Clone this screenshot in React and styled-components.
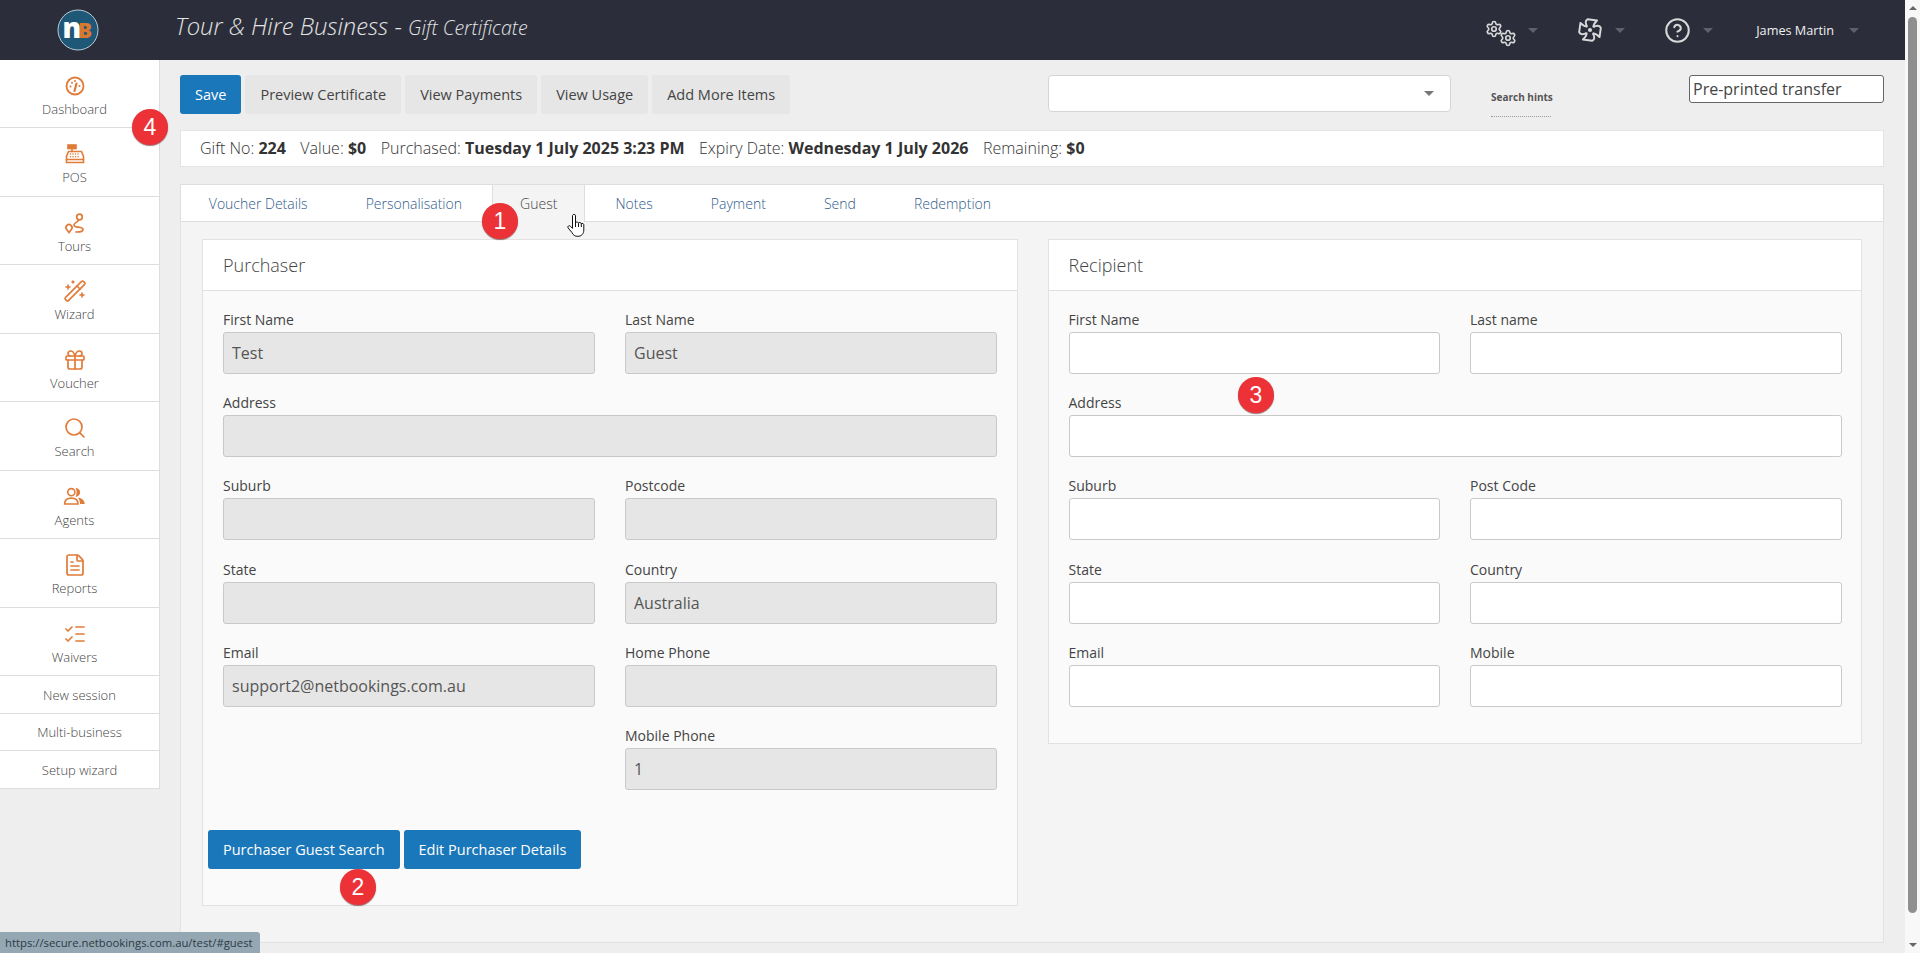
import React from 'react'
import styled, { createGlobalStyle } from 'styled-components'
import {
  CircleHelp,
  FileText,
  Gift,
  ListChecks,
  Search,
  Settings,
  WandSparkles,
} from 'lucide-react'

const GlobalStyle = createGlobalStyle`
  html, body {
    margin: 0;
    height: 100%;
    overflow: hidden;
    background: #eeeeee;
    font-family: 'Open Sans', 'Liberation Sans', sans-serif;
    color: #444;
  }
  * { box-sizing: border-box; }
`

const Page = styled.div`
  position: relative;
  display: flex;
  width: 1920px;
  height: 953px;
  overflow: hidden;
`

const Main = styled.div`
  width: 1905px;
  display: flex;
  flex-direction: column;
`

const TopBar = styled.header`
  height: 60px;
  flex: none;
  display: flex;
  align-items: center;
  background: #2b2e3a;
  color: #e4e4e4;
`

const Logo = styled.svg`
  width: 42px;
  height: 42px;
  margin-left: 57px;
  flex: none;
`

const Title = styled.div`
  margin-left: 76px;
  margin-top: -8px;
  font-size: 23.8px;
  font-weight: 300;
  font-style: italic;

  small {
    font-size: 19.6px;
  }
`

const TopIcons = styled.div`
  margin-left: auto;
  display: flex;
  align-items: center;
  padding-right: 46px;
`

const TopItem = styled.div`
  display: flex;
  align-items: center;
  margin-left: ${props => props.$gap || 0}px;
  font-size: 12.7px;
  color: #f0f0f0;
  svg { color: #d8d8d8; }
`

const Caret = styled.span`
  width: 0;
  height: 0;
  margin-left: ${props => props.$gap || 12}px;
  border-left: 5px solid transparent;
  border-right: 5px solid transparent;
  border-top: 5px solid ${props => props.$color || '#5e616b'};
`

const GearPair = styled.span`
  position: relative;
  display: block;
  width: 28px;
  height: 23px;

  svg {
    position: absolute;
    left: -1.5px;
    top: 1px;
  }
  svg + svg {
    left: 12.5px;
    top: 10px;
  }
`

const Body = styled.div`
  flex: 1;
  display: flex;
  min-height: 0;
`

const Sidebar = styled.nav`
  width: 160px;
  flex: none;
  align-self: flex-start;
  background: #fff;
  border-right: 1px solid #dddddd;
`

const NavItem = styled.a`
  display: flex;
  flex-direction: column;
  align-items: center;
  height: 68.45px;
  padding: 14px 10px 0 0;
  border-bottom: 1px solid #dddddd;
  font-size: 13px;
  font-weight: 300;
  color: #444;
  line-height: 18px;
`

const IconSlot = styled.span`
  height: 24px;
  margin-bottom: 2px;
  flex: none;
  display: flex;
  align-items: center;
  justify-content: center;
  color: #e07b39;
`

const NavSmall = styled.a`
  display: flex;
  align-items: center;
  justify-content: center;
  height: 37.6px;
  padding-top: 1px;
  border-bottom: 1px solid #dddddd;
  font-size: 13px;
  font-weight: 300;
  color: #444;
`

const Workspace = styled.main`
  flex: 1;
  padding: 15px 21px 0 20px;
  min-width: 0;
`

const Toolbar = styled.div`
  display: flex;
  align-items: flex-start;
  height: 39px;
  margin-bottom: 16px;
`

const Button = styled.button`
  height: 39px;
  padding: 0 15px;
  margin-right: 4px;
  border: none;
  border-radius: 3px;
  background: ${props => (props.$primary ? '#1a77ba' : '#e6e6e6')};
  color: ${props => (props.$primary ? '#fff' : '#444')};
  font-family: inherit;
  font-size: 14.5px;
  white-space: nowrap;
`

const SelectBox = styled.div`
  width: 403px;
  height: 37px;
  margin-left: 254px;
  display: flex;
  align-items: center;
  justify-content: flex-end;
  padding-right: 16px;
  background: #fff;
  border: 1px solid #d4d4d4;
  border-radius: 4px;
`

const Hints = styled.div`
  margin-left: 40px;
  width: 60px;
  height: 42px;
  padding-top: 15px;
  border-bottom: 1px dotted #999;
  font-size: 10px;
  font-weight: 700;
  color: #555;
  white-space: nowrap;
  line-height: 14px;
`

const PlainInput = styled.input`
  width: 195px;
  height: 28px;
  margin-left: 138px;
  padding: 0 3px;
  border: 1px solid #666;
  border-radius: 3px;
  background: #fff;
  color: #444;
  font-family: inherit;
  font-size: 16px;
  outline: none;
`

const InfoBar = styled.div`
  height: 37px;
  margin-bottom: 17px;
  padding: 0 0 2px 19px;
  display: flex;
  align-items: center;
  background: #fff;
  border: 1px solid #e4e4e4;
  font-size: 16px;
  font-weight: 300;
  color: #333;

  span {
    margin-right: 14.5px;
    white-space: nowrap;
  }
  b {
    font-weight: 700;
  }
`

const Tabs = styled.div`
  height: 38px;
  display: flex;
  background: #fff;
  border: 1px solid #dedede;
`

const Tab = styled.a`
  padding: 0 ${props => (props.$active ? '26.8px' : '27.8px')};
  margin-right: 2.5px;
  display: flex;
  align-items: center;
  height: ${props => (props.$active ? '37px' : '36px')};
  font-size: 14px;
  font-weight: 300;
  color: ${props => (props.$active ? '#444' : '#2f5b8c')};
  background: ${props => (props.$active ? '#f4f4f4' : 'transparent')};
  ${props => props.$active && 'border: 1px solid #dedede; border-width: 0 1px;'}
`

const Panel = styled.section`
  height: 721px;
  padding: 17px 21px 0 21px;
  display: flex;
  align-items: flex-start;
  gap: 30px;
  background: #f4f4f4;
  border: 1px solid #e2e2e2;
  border-top: none;
`

const Card = styled.div`
  width: ${props => props.$width}px;
  height: ${props => props.$height}px;
  flex: none;
  background: #fafafa;
  border: 1px solid #e2e2e2;
`

const CardHead = styled.h3`
  height: 51px;
  margin: 0;
  padding-left: ${props => props.$inset}px;
  display: flex;
  align-items: center;
  background: #fff;
  border-bottom: 1px solid #e0e0e0;
  font-size: 18px;
  font-weight: 300;
  color: #444;
`

const FormGrid = styled.div`
  display: grid;
  grid-template-columns: ${props => props.$colWidth}px ${props => props.$colWidth}px;
  column-gap: 30px;
  row-gap: 19.2px;
  padding: 19px 0 0 ${props => props.$inset}px;
`

const Field = styled.label`
  display: block;
  grid-column: ${props => props.$col || 'auto'};
  font-size: 14px;
  color: #444;
  line-height: 20px;
`

const FieldInput = styled.input`
  display: block;
  width: 100%;
  height: 42px;
  margin-top: 2px;
  padding: 0 8px;
  border: 1px solid #c9c9c9;
  border-radius: 3px;
  background: ${props => (props.disabled ? '#e6e6e6' : '#fff')};
  color: #555;
  font-family: inherit;
  font-size: 16px;
  outline: none;
  opacity: 1;
`

const ButtonRow = styled.div`
  display: flex;
  margin: 40px 0 0 5px;
`

const Badge = styled.div`
  position: absolute;
  left: ${props => props.$x - 18}px;
  top: ${props => props.$y - 18}px;
  width: 36px;
  height: 36px;
  display: flex;
  align-items: center;
  justify-content: center;
  border-radius: 50%;
  background: #ec3237;
  box-shadow: 0 1px 1px rgba(90, 20, 20, 0.6);
  color: #fff;
  font-family: 'Liberation Sans', sans-serif;
  font-size: 23px;
`

const HandCursor = styled.svg`
  position: absolute;
  left: 567px;
  top: 213px;
  width: 18px;
  height: 24px;
`

const StatusTip = styled.div`
  position: absolute;
  left: 0;
  bottom: 0;
  width: 260px;
  height: 21px;
  padding-left: 5px;
  display: flex;
  align-items: center;
  background: #95a7b3;
  border-top-right-radius: 3px;
  color: #2c3a44;
  font-size: 11.3px;
  white-space: nowrap;
`

const ScrollTrack = styled.div`
  width: 15px;
  flex: none;
  display: flex;
  flex-direction: column;
  align-items: center;
  background: #f8f8f8;
  padding: 6px 0;
`

const ScrollArrow = styled.span`
  width: 0;
  height: 0;
  flex: none;
  border-left: 4px solid transparent;
  border-right: 4px solid transparent;
  ${props => (props.$up ? 'border-bottom' : 'border-top')}: 4px solid #666;
`

const ScrollThumb = styled.div`
  width: 9px;
  flex: 1;
  margin: 7px 0 30px;
  border-radius: 5px;
  background: #8f8f8f;
`

// pinwheel in the top bar, one blade turned four times
const PinwheelIcon = () => (
  <svg width="26" height="26" viewBox="0 0 24 24" fill="none" stroke="currentColor" strokeWidth="1.800" strokeLinejoin="round">
    {[0, 90, 180, 270].map(a => (
      <path key={a} transform={`rotate(${a} 12 12)`} d="M9.500 9C7.500 6 7.500 3 10 2l8.500 1.200C16.500 5 15.200 7 15 9.500" />
    ))}
    <circle cx="12" cy="12" r="1" fill="currentColor" />
  </svg>
)

// dashboard dial
const DialIcon = () => (
  <svg width="24" height="24" viewBox="0 0 24 24" fill="none" stroke="currentColor" strokeWidth="1.800" strokeLinecap="round">
    <circle cx="12" cy="12" r="8.500" />
    <path d="M11.500 17l2-7.500" strokeWidth="2.200" />
    <path d="M7.500 12.500v.01M9 8.800v.01M12 7v.01M16.500 12v.01" strokeWidth="2" />
  </svg>
)

const TillIcon = () => (
  <svg width="24" height="24" viewBox="0 0 24 24" fill="none" stroke="currentColor" strokeWidth="1.600" strokeLinecap="round">
    <rect x="5" y="3" width="8" height="3.500" fill="currentColor" />
    <path d="M9 6.500v3" />
    <path d="M5.500 9.500h13l2 5v6h-17v-6z" />
    <path d="M3.500 17.500h17" />
    <path d="M7.500 12h.01M10 12h.01M12.500 12h.01M15 12h.01M7.500 14.800h.01M10 14.800h.01M12.500 14.800h.01M15 14.800h.01" />
  </svg>
)

const RouteIcon = () => (
  <svg width="24" height="24" viewBox="0 0 24 24" fill="none" stroke="currentColor" strokeWidth="1.700" strokeLinecap="round">
    <circle cx="16.500" cy="6" r="2.800" />
    <path d="M6 21.500l-2.300-3a3 3 0 1 1 4.600 0z" />
    <path d="M15.500 9c-1 2.500-4.500 2.500-4.500 5.200 0 3 9 1 9 4.300 0 2.500-3 2.500-7 2.500" />
  </svg>
)

const AgentsIcon = () => (
  <svg width="23" height="19" viewBox="0 0 28 24" fill="none" stroke="currentColor" strokeWidth="2" strokeLinecap="round">
    <circle cx="10" cy="6.500" r="4.500" />
    <path d="M1.500 21.500c0-5 3.500-7.500 8.500-7.500s8.500 2.500 8.500 7.500z" />
    <path d="M17 2.500a4.500 4.500 0 0 1 0 8.500c1-2.500 1-6 0-8.500z" fill="currentColor" />
    <path d="M18.500 13.500c4.500 0 8 3 8.500 8h-6c0-3-1-6-2.500-8z" fill="currentColor" stroke="none" />
  </svg>
)

const navItems = [
  { label: 'Dashboard', icon: <DialIcon /> },
  { label: 'POS', icon: <TillIcon /> },
  { label: 'Tours', icon: <RouteIcon /> },
  { label: 'Wizard', icon: <WandSparkles size={24} strokeWidth={1.6} /> },
  { label: 'Voucher', icon: <Gift size={24} strokeWidth={1.7} /> },
  { label: 'Search', icon: <Search size={24} strokeWidth={1.7} /> },
  { label: 'Agents', icon: <AgentsIcon /> },
  { label: 'Reports', icon: <FileText size={24} strokeWidth={1.7} /> },
  { label: 'Waivers', icon: <ListChecks size={24} strokeWidth={1.7} /> },
]

const tabs = ['Voucher Details', 'Personalisation', 'Guest', 'Notes', 'Payment', 'Send', 'Redemption']

const purchaser = [
  { label: 'First Name', value: 'Test' },
  { label: 'Last Name', value: 'Guest' },
  { label: 'Address', value: '', col: '1 / 3' },
  { label: 'Suburb', value: '' },
  { label: 'Postcode', value: '' },
  { label: 'State', value: '' },
  { label: 'Country', value: 'Australia' },
  { label: 'Email', value: 'support2@netbookings.com.au' },
  { label: 'Home Phone', value: '' },
  { label: 'Mobile Phone', value: '1', col: '2' },
]

const recipient = [
  { label: 'First Name' },
  { label: 'Last name' },
  { label: 'Address', col: '1 / 3' },
  { label: 'Suburb' },
  { label: 'Post Code' },
  { label: 'State' },
  { label: 'Country' },
  { label: 'Email' },
  { label: 'Mobile' },
]

const App = () => (
  <Page>
    <GlobalStyle />
    <Main>
      <TopBar>
        <Logo viewBox="0 0 42 42">
          <circle cx="21" cy="21" r="20" fill="#1f5776" stroke="#b9ccd6" strokeWidth="1" />
          <text x="21" y="29" fontFamily="Open Sans" fontWeight="800" fontSize="21" fill="#d9782f">B</text>
          <text x="5.500" y="29" fontFamily="Open Sans" fontWeight="800" fontSize="28" fill="#fff">n</text>
        </Logo>
        <Title>
          Tour &amp; Hire Business - <small>Gift Certificate</small>
        </Title>
        <TopIcons>
          <TopItem>
            <GearPair>
              <Settings size={18} strokeWidth={2.2} />
              <Settings size={18} strokeWidth={2.2} />
            </GearPair>
            <Caret $gap={14} />
          </TopItem>
          <TopItem $gap={39}>
            <PinwheelIcon />
            <Caret />
          </TopItem>
          <TopItem $gap={39}>
            <CircleHelp size={27} strokeWidth={1.8} />
            <Caret />
          </TopItem>
          <TopItem $gap={43}>
            James Martin
            <Caret $gap={15} />
          </TopItem>
        </TopIcons>
      </TopBar>
      <Body>
        <Sidebar>
          {navItems.map(item => (
            <NavItem key={item.label}>
              <IconSlot>{item.icon}</IconSlot>
              {item.label}
            </NavItem>
          ))}
          <NavSmall>New session</NavSmall>
          <NavSmall>Multi-business</NavSmall>
          <NavSmall>Setup wizard</NavSmall>
        </Sidebar>
        <Workspace>
          <Toolbar>
            <Button $primary>Save</Button>
            <Button>Preview Certificate</Button>
            <Button>View Payments</Button>
            <Button>View Usage</Button>
            <Button>Add More Items</Button>
            <SelectBox>
              <Caret $gap={1} $color="#777" />
            </SelectBox>
            <Hints>Search hints</Hints>
            <PlainInput defaultValue="Pre-printed transfer" />
          </Toolbar>
          <InfoBar>
            <span>Gift No: <b>224</b></span>
            <span>Value: <b>$0</b></span>
            <span>Purchased: <b>Tuesday 1 July 2025 3:23 PM</b></span>
            <span>Expiry Date: <b>Wednesday 1 July 2026</b></span>
            <span>Remaining: <b>$0</b></span>
          </InfoBar>
          <Tabs>
            {tabs.map(t => (
              <Tab key={t} $active={t === 'Guest'}>{t}</Tab>
            ))}
          </Tabs>
          <Panel>
            <Card $width={816} $height={667}>
              <CardHead $inset={20}>Purchaser</CardHead>
              <FormGrid $inset={20} $colWidth={372}>
                {purchaser.map(f => (
                  <Field key={f.label} $col={f.col}>
                    {f.label}
                    <FieldInput disabled value={f.value} readOnly />
                  </Field>
                ))}
              </FormGrid>
              <ButtonRow>
                <Button $primary>Purchaser Guest Search</Button>
                <Button $primary>Edit Purchaser Details</Button>
              </ButtonRow>
            </Card>
            <Card $width={814} $height={505}>
              <CardHead $inset={19.5}>Recipient</CardHead>
              <FormGrid $inset={19.5} $colWidth={371.5}>
                {recipient.map(f => (
                  <Field key={f.label} $col={f.col}>
                    {f.label}
                    <FieldInput />
                  </Field>
                ))}
              </FormGrid>
            </Card>
          </Panel>
        </Workspace>
      </Body>
    </Main>
    <ScrollTrack>
      <ScrollArrow $up />
      <ScrollThumb />
      <ScrollArrow />
    </ScrollTrack>
    <Badge $x={500} $y={221}>1</Badge>
    <Badge $x={358} $y={887}>2</Badge>
    <Badge $x={1256} $y={395}>3</Badge>
    <Badge $x={150} $y={127}>4</Badge>
    <HandCursor viewBox="0 0 18 24" fill="#fff" stroke="#111" strokeWidth="1" strokeLinejoin="round">
      <path d="M5.500 2.500c.6-1.800 3-1.500 3 .4V10c0-1.300 3-1.300 3 .3 0-1.200 2.800-1.100 2.800.5 0-.8 2.500-.6 2.500 1V17c0 4-2.500 6.300-6 6.300-3 0-4.500-1-6-4L1 14.800c-.8-1.600 1.200-2.800 2.400-1.600l2.100 2.200z" />
      <path d="M8.500 10v4M11.500 10.300V14M14.300 10.800V14" fill="none" />
    </HandCursor>
    <StatusTip>https://secure.netbookings.com.au/test/#guest</StatusTip>
  </Page>
)

export default App
